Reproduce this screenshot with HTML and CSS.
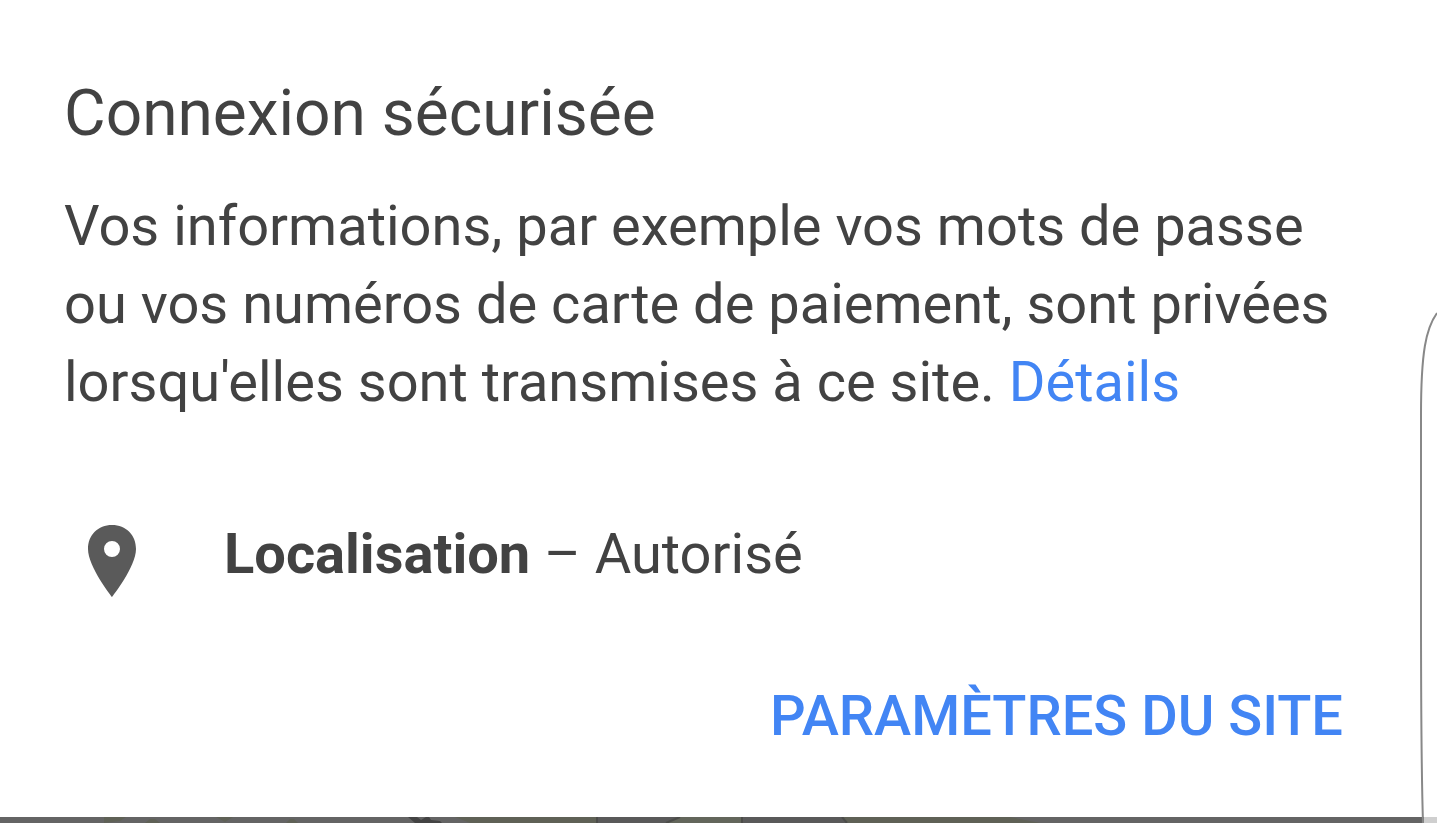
FILE: index.html
```html
<!DOCTYPE html>
<html lang="fr">
<head>
<meta charset="utf-8">
<meta name="viewport" content="width=device-width, initial-scale=1">
<title>Connexion sécurisée</title>
<link rel="stylesheet" href="styles.css">
</head>
<body>
<main class="dialog">
  <h1 class="title">Connexion sécurisée</h1>
  <p class="message">Vos informations, par exemple vos mots de passe ou vos numéros de carte de paiement, sont privées lorsqu'elles sont transmises à ce site. <a class="link" href="#">Détails</a></p>
  <div class="permission">
    <svg class="pin" viewBox="0 0 48 72" aria-hidden="true"><path fill-rule="evenodd" d="M24 0C10 0 0 10 0 24C0 42 24 72 24 72S48 42 48 24C48 10 38 0 24 0ZM24 32a8 8 0 1 1 0-16a8 8 0 0 1 0 16Z"/></svg>
    <p class="status"><strong class="name">Localisation</strong> – Autorisé</p>
  </div>
  <div class="actions"><button class="settings" type="button">PARAMÈTRES DU SITE</button></div>
</main>
<svg class="page-strip" viewBox="0 0 1437 6" preserveAspectRatio="none" aria-hidden="true">
  <rect width="1437" height="6" fill="#646464"/>
  <path fill="#5f6156" d="M104 0H126L120 4L104 6ZM145 6L150 2H155L160 6ZM216 0H233L225 5ZM286 6L290 2H294L298 6ZM455 0H597V6H470ZM843 0H1010L1040 6H848Z"/>
  <path fill="#434343" d="M408 0H417L421 3L426 0H429L431 3L440 4L442 6H415Z"/>
  <path fill="#595959" d="M597 0H678L666 6H597ZM741 0H843L847 6H743Z"/>
  <path fill="#63665b" d="M678 0H741L743 6H668Z"/>
  <path stroke="#4b4c49" stroke-width="2" fill="none" d="M597 0V6M680 0L666 6M742 0V6M842 0L847 6"/>
  <rect x="1424" width="13" height="6" fill="#cfcfcf"/>
</svg>
<svg class="edge" viewBox="0 0 18 513" aria-hidden="true"><path d="M18 3C7 18 2 42 2 105L2 300Q2 450 4 513"/></svg>
</body>
</html>
```
FILE: styles.css
```css
* { box-sizing: border-box; }
body {
  margin: 0;
  min-height: 100vh;
  display: flex;
  flex-direction: column;
  background: #fff;
  color: #424242;
  font-family: Roboto, sans-serif;
  font-size: 56px;
  line-height: 78px;
}
.dialog { flex: 1; padding: 72px 64px 0; }
.title { margin: 0; font-size: 64px; font-weight: 400; line-height: 84px; }
.message { margin: 31px 0 0; }
.link { color: #4285f4; text-decoration: none; }
.permission { display: flex; align-items: flex-start; gap: 88px; margin-top: 94px; padding-left: 24px; }
.pin { width: 48px; height: 72px; margin-top: 10px; fill: #5a5a5a; }
.status { margin: 0; }
.name { font-weight: 700; }
.actions { display: flex; justify-content: flex-end; margin-top: 80px; padding-right: 30px; }
.settings {
  padding: 0;
  border: 0;
  background: none;
  color: #4285f4;
  font: 500 56px/78px Roboto, sans-serif;
  cursor: pointer;
}
.page-strip { display: block; width: 100%; height: 6px; }
.edge {
  position: absolute;
  right: 0;
  bottom: 0;
  width: 18px;
  height: 513px;
  fill: none;
  stroke: #888;
  stroke-width: 2;
}
```
